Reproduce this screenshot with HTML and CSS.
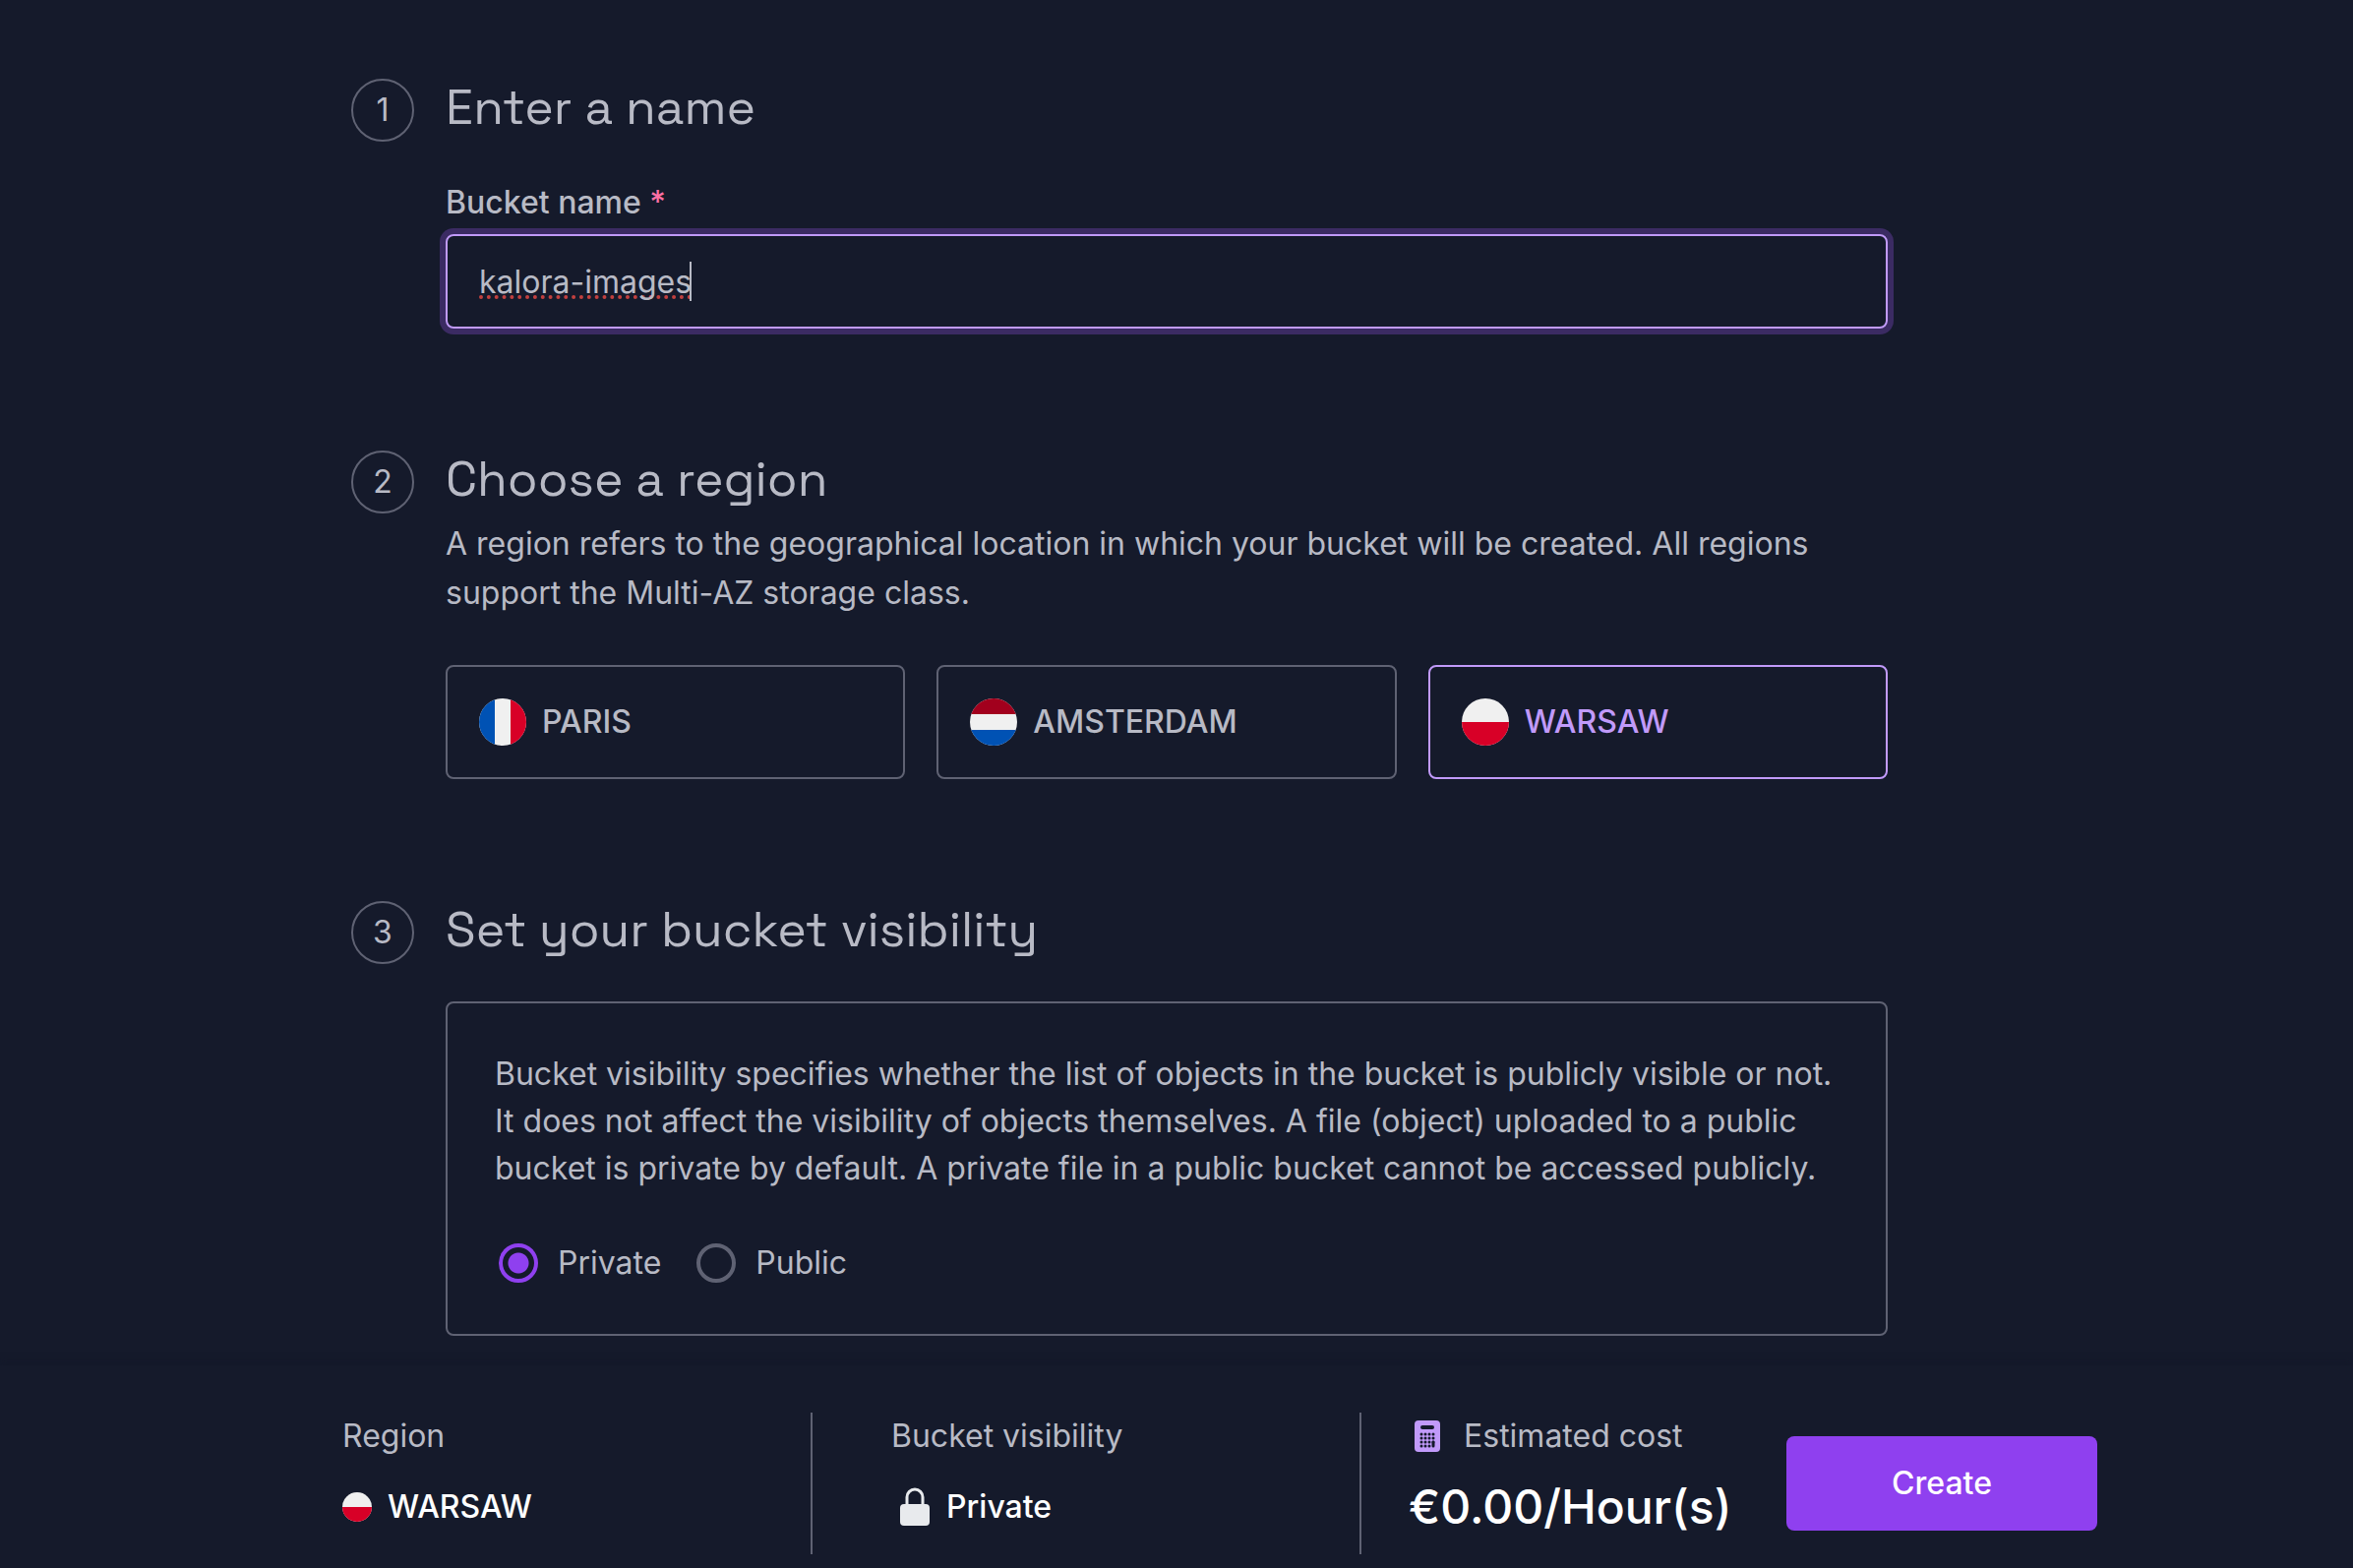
FILE: index.html
```html
<!DOCTYPE html>
<html lang="en">
<head>
    <meta charset="UTF-8">
    <meta name="viewport" content="width=device-width, initial-scale=1.0">
    <title>Create a bucket</title>
    <link rel="stylesheet" href="styles.css">
</head>
<body>

    <form id="bucketForm" class="page">
        <main class="steps">
            <section class="step">
                <span class="step-number">1</span>
                <div class="step-body">
                    <h2>Enter a name</h2>
                    <div class="field">
                        <label for="bucketName">Bucket name <span class="required">*</span></label>
                        <div class="input-wrap">
                            <input type="text" id="bucketName" name="bucketName" value="kalora-images" autocomplete="off" required autofocus>
                            <span id="caret" class="caret"></span>
                        </div>
                    </div>
                </div>
            </section>

            <section class="step">
                <span class="step-number">2</span>
                <div class="step-body">
                    <h2>Choose a region</h2>
                    <p class="description">A region refers to the geographical location in which your bucket will be created. All regions support the Multi-AZ storage class.</p>
                    <div class="regions">
                        <label class="region">
                            <input type="radio" name="region" value="PARIS">
                            <svg class="flag" viewBox="0 0 48 48" aria-hidden="true">
                                <clipPath id="round"><circle cx="24" cy="24" r="24"/></clipPath>
                                <g clip-path="url(#round)">
                                    <rect width="48" height="48" fill="#f0f0f0"/>
                                    <rect width="16" height="48" fill="#0052b4"/>
                                    <rect x="32" width="16" height="48" fill="#d80027"/>
                                </g>
                            </svg>
                            <span>PARIS</span>
                        </label>
                        <label class="region">
                            <input type="radio" name="region" value="AMSTERDAM">
                            <svg class="flag" viewBox="0 0 48 48" aria-hidden="true">
                                <g clip-path="url(#round)">
                                    <rect width="48" height="48" fill="#f0f0f0"/>
                                    <rect width="48" height="16" fill="#a2001d"/>
                                    <rect y="32" width="48" height="16" fill="#0052b4"/>
                                </g>
                            </svg>
                            <span>AMSTERDAM</span>
                        </label>
                        <label class="region">
                            <input type="radio" name="region" value="WARSAW" checked>
                            <svg class="flag" viewBox="0 0 48 48" aria-hidden="true">
                                <g clip-path="url(#round)">
                                    <rect width="48" height="48" fill="#f0f0f0"/>
                                    <rect y="24" width="48" height="24" fill="#d80027"/>
                                </g>
                            </svg>
                            <span>WARSAW</span>
                        </label>
                    </div>
                </div>
            </section>

            <section class="step">
                <span class="step-number">3</span>
                <div class="step-body">
                    <h2>Set your bucket visibility</h2>
                    <div class="visibility">
                        <p>Bucket visibility specifies whether the list of objects in the bucket is publicly visible or not. It does not affect the visibility of objects themselves. A file (object) uploaded to a public bucket is private by default. A private file in a public bucket cannot be accessed publicly.</p>
                        <div class="options">
                            <label class="option">
                                <input type="radio" name="visibility" value="Private" checked>
                                Private
                            </label>
                            <label class="option">
                                <input type="radio" name="visibility" value="Public">
                                Public
                            </label>
                        </div>
                    </div>
                </div>
            </section>
        </main>

        <footer class="summary">
            <div class="summary-item">
                <span class="summary-label">Region</span>
                <div class="summary-value">
                    <svg class="flag-small" viewBox="0 0 48 48" aria-hidden="true">
                        <g clip-path="url(#round)">
                            <rect width="48" height="48" fill="#f0f0f0"/>
                            <rect y="24" width="48" height="24" fill="#d80027"/>
                        </g>
                    </svg>
                    <span>WARSAW</span>
                </div>
            </div>
            <div class="summary-item">
                <span class="summary-label">Bucket visibility</span>
                <div class="summary-value visibility-value">
                    <svg class="lock" viewBox="0 0 32 40" aria-hidden="true">
                        <path d="M8 18V10a8 8 0 0 1 16 0v8" fill="none" stroke="#e8eaed" stroke-width="3"/>
                        <rect x="1" y="17" width="30" height="22" rx="4" fill="#e8eaed"/>
                    </svg>
                    <span id="summaryVisibility">Private</span>
                </div>
            </div>
            <div class="summary-item summary-cost">
                <span class="summary-label">
                    <svg class="calculator" viewBox="0 0 26 32" aria-hidden="true">
                        <rect width="26" height="32" rx="4" fill="#c19afa"/>
                        <rect x="6" y="5" width="14" height="4" rx="2" fill="#151a2d"/>
                        <path d="M7 14h14M7 18h14M7 22h14M7 26h10" stroke="#151a2d" stroke-width="3" stroke-linecap="round" stroke-dasharray="0 4"/>
                        <path d="M19 22v4" stroke="#151a2d" stroke-width="3" stroke-linecap="round"/>
                    </svg>
                    Estimated cost
                </span>
                <strong class="price">€0.00/Hour(s)</strong>
            </div>
            <button type="submit">Create</button>
        </footer>
    </form>

    <script>
        var bucketName = document.getElementById("bucketName");
        var caret = document.getElementById("caret");

        // Put the cursor after the name
        bucketName.focus();
        bucketName.setSelectionRange(bucketName.value.length, bucketName.value.length);

        function removeCaret() {
            caret.style.display = "none";
            bucketName.style.caretColor = "auto";
        }
        bucketName.addEventListener("keydown", removeCaret);
        bucketName.addEventListener("mousedown", removeCaret);

        document.getElementById("bucketForm").addEventListener("submit", function(event) {
            event.preventDefault();
        });

        document.querySelectorAll('input[name="visibility"]').forEach(function(radio) {
            radio.addEventListener("change", function() {
                document.getElementById("summaryVisibility").innerText = radio.value;
            });
        });
    </script>
</body>
</html>
```
FILE: styles.css
```css
* {
    box-sizing: border-box;
}
body {
    font-family: Inter, "Liberation Sans", sans-serif;
    font-size: 32px;
    line-height: 48px;
    margin: 0;
    background-color: #151a2b;
    color: #b8bac5;
}
h2,
p {
    margin: 0;
}
.page {
    min-height: 100vh;
    display: flex;
    flex-direction: column;
}
.steps {
    display: flex;
    flex-direction: column;
    gap: 120px;
    padding: 76px 473px 28px 357px;
}
.step {
    display: grid;
    grid-template-columns: 64px 1fr;
    gap: 32px;
}
.step-number {
    width: 64px;
    height: 64px;
    margin-top: 4px;
    border: 2px solid #5f6273;
    border-radius: 50%;
    line-height: 60px;
    text-align: center;
}
h2 {
    font-family: "Space Grotesk", Inter, "Liberation Sans", sans-serif;
    font-size: 50px;
    font-weight: 400;
    line-height: 66px;
}
.field {
    display: flex;
    flex-direction: column;
    gap: 8px;
    margin-top: 40px;
}
.field label {
    font-weight: 500;
}
.required {
    color: #ff6fa5;
}
.input-wrap {
    position: relative;
}
input[type="text"] {
    display: block;
    width: 100%;
    height: 96px;
    padding: 0 32px;
    border: 2px solid #c19afa;
    border-radius: 8px;
    outline: none;
    background-color: transparent;
    box-shadow: 0 0 0 6px #3b2b63;
    color: inherit;
    font: inherit;
    caret-color: transparent;
    text-decoration: underline dotted #c2403f 4px;
    text-underline-offset: 3px;
    text-decoration-skip-ink: none;
}
.caret {
    position: absolute;
    top: 28px;
    left: 248px;
    width: 2px;
    height: 40px;
    background-color: #b8bac5;
}
.description {
    margin-top: 8px;
    line-height: 50px;
}
.regions {
    display: grid;
    grid-template-columns: repeat(3, 1fr);
    gap: 32px;
    margin-top: 48px;
}
.region {
    display: flex;
    align-items: center;
    gap: 16px;
    height: 116px;
    padding: 0 32px;
    border: 2px solid #5f6273;
    border-radius: 8px;
    font-weight: 500;
    cursor: pointer;
}
.region input {
    appearance: none;
    position: absolute;
    margin: 0;
}
.region:has(input:checked) {
    border-color: #c19afa;
    color: #c19afa;
}
.flag {
    width: 48px;
    height: 48px;
}
.visibility {
    margin-top: 40px;
    padding: 48px;
    border: 2px solid #5f6273;
    border-radius: 8px;
}
.options {
    display: flex;
    gap: 36px;
    margin-top: 48px;
    padding-left: 4px;
}
.option {
    display: flex;
    align-items: center;
    gap: 20px;
}
.option input {
    appearance: none;
    width: 40px;
    height: 40px;
    margin: 0;
    border: 4px solid #5f6273;
    border-radius: 50%;
}
.option input:checked {
    border-color: #8f40ef;
    background: radial-gradient(circle, #8f40ef 10px, transparent 11px);
}
.summary {
    position: sticky;
    bottom: 0;
    display: flex;
    align-items: flex-start;
    margin-top: auto;
    padding: 48px 260px 14px 348px;
    background-color: #151a2b;
    box-shadow: 0 -2px 8px #131829;
}
.summary-item {
    flex: 1;
    display: flex;
    flex-direction: column;
    gap: 24px;
    height: 144px;
}
.summary-item + .summary-item {
    padding-left: 80px;
    border-left: 2px solid #5f6273;
}
.summary-item + .summary-cost {
    flex: none;
    width: 434px;
    padding-left: 48px;
}
.summary-label {
    display: flex;
    align-items: center;
}
.summary-value {
    display: flex;
    align-items: center;
    gap: 16px;
    color: #fff;
    font-weight: 500;
}
.visibility-value {
    padding-left: 8px;
}
.flag-small {
    width: 30px;
    height: 30px;
}
.lock {
    width: 32px;
    height: 40px;
}
.calculator {
    width: 26px;
    height: 32px;
    margin: 0 24px 0 6px;
}
.price {
    color: #fff;
    font-size: 48px;
    font-weight: 500;
}
button {
    width: 316px;
    height: 96px;
    margin-top: 24px;
    border: none;
    border-radius: 8px;
    background-color: #8f40ef;
    color: #fff;
    font: inherit;
    font-weight: 500;
    cursor: pointer;
}
button:hover {
    background-color: #7c2fdb;
}
```
